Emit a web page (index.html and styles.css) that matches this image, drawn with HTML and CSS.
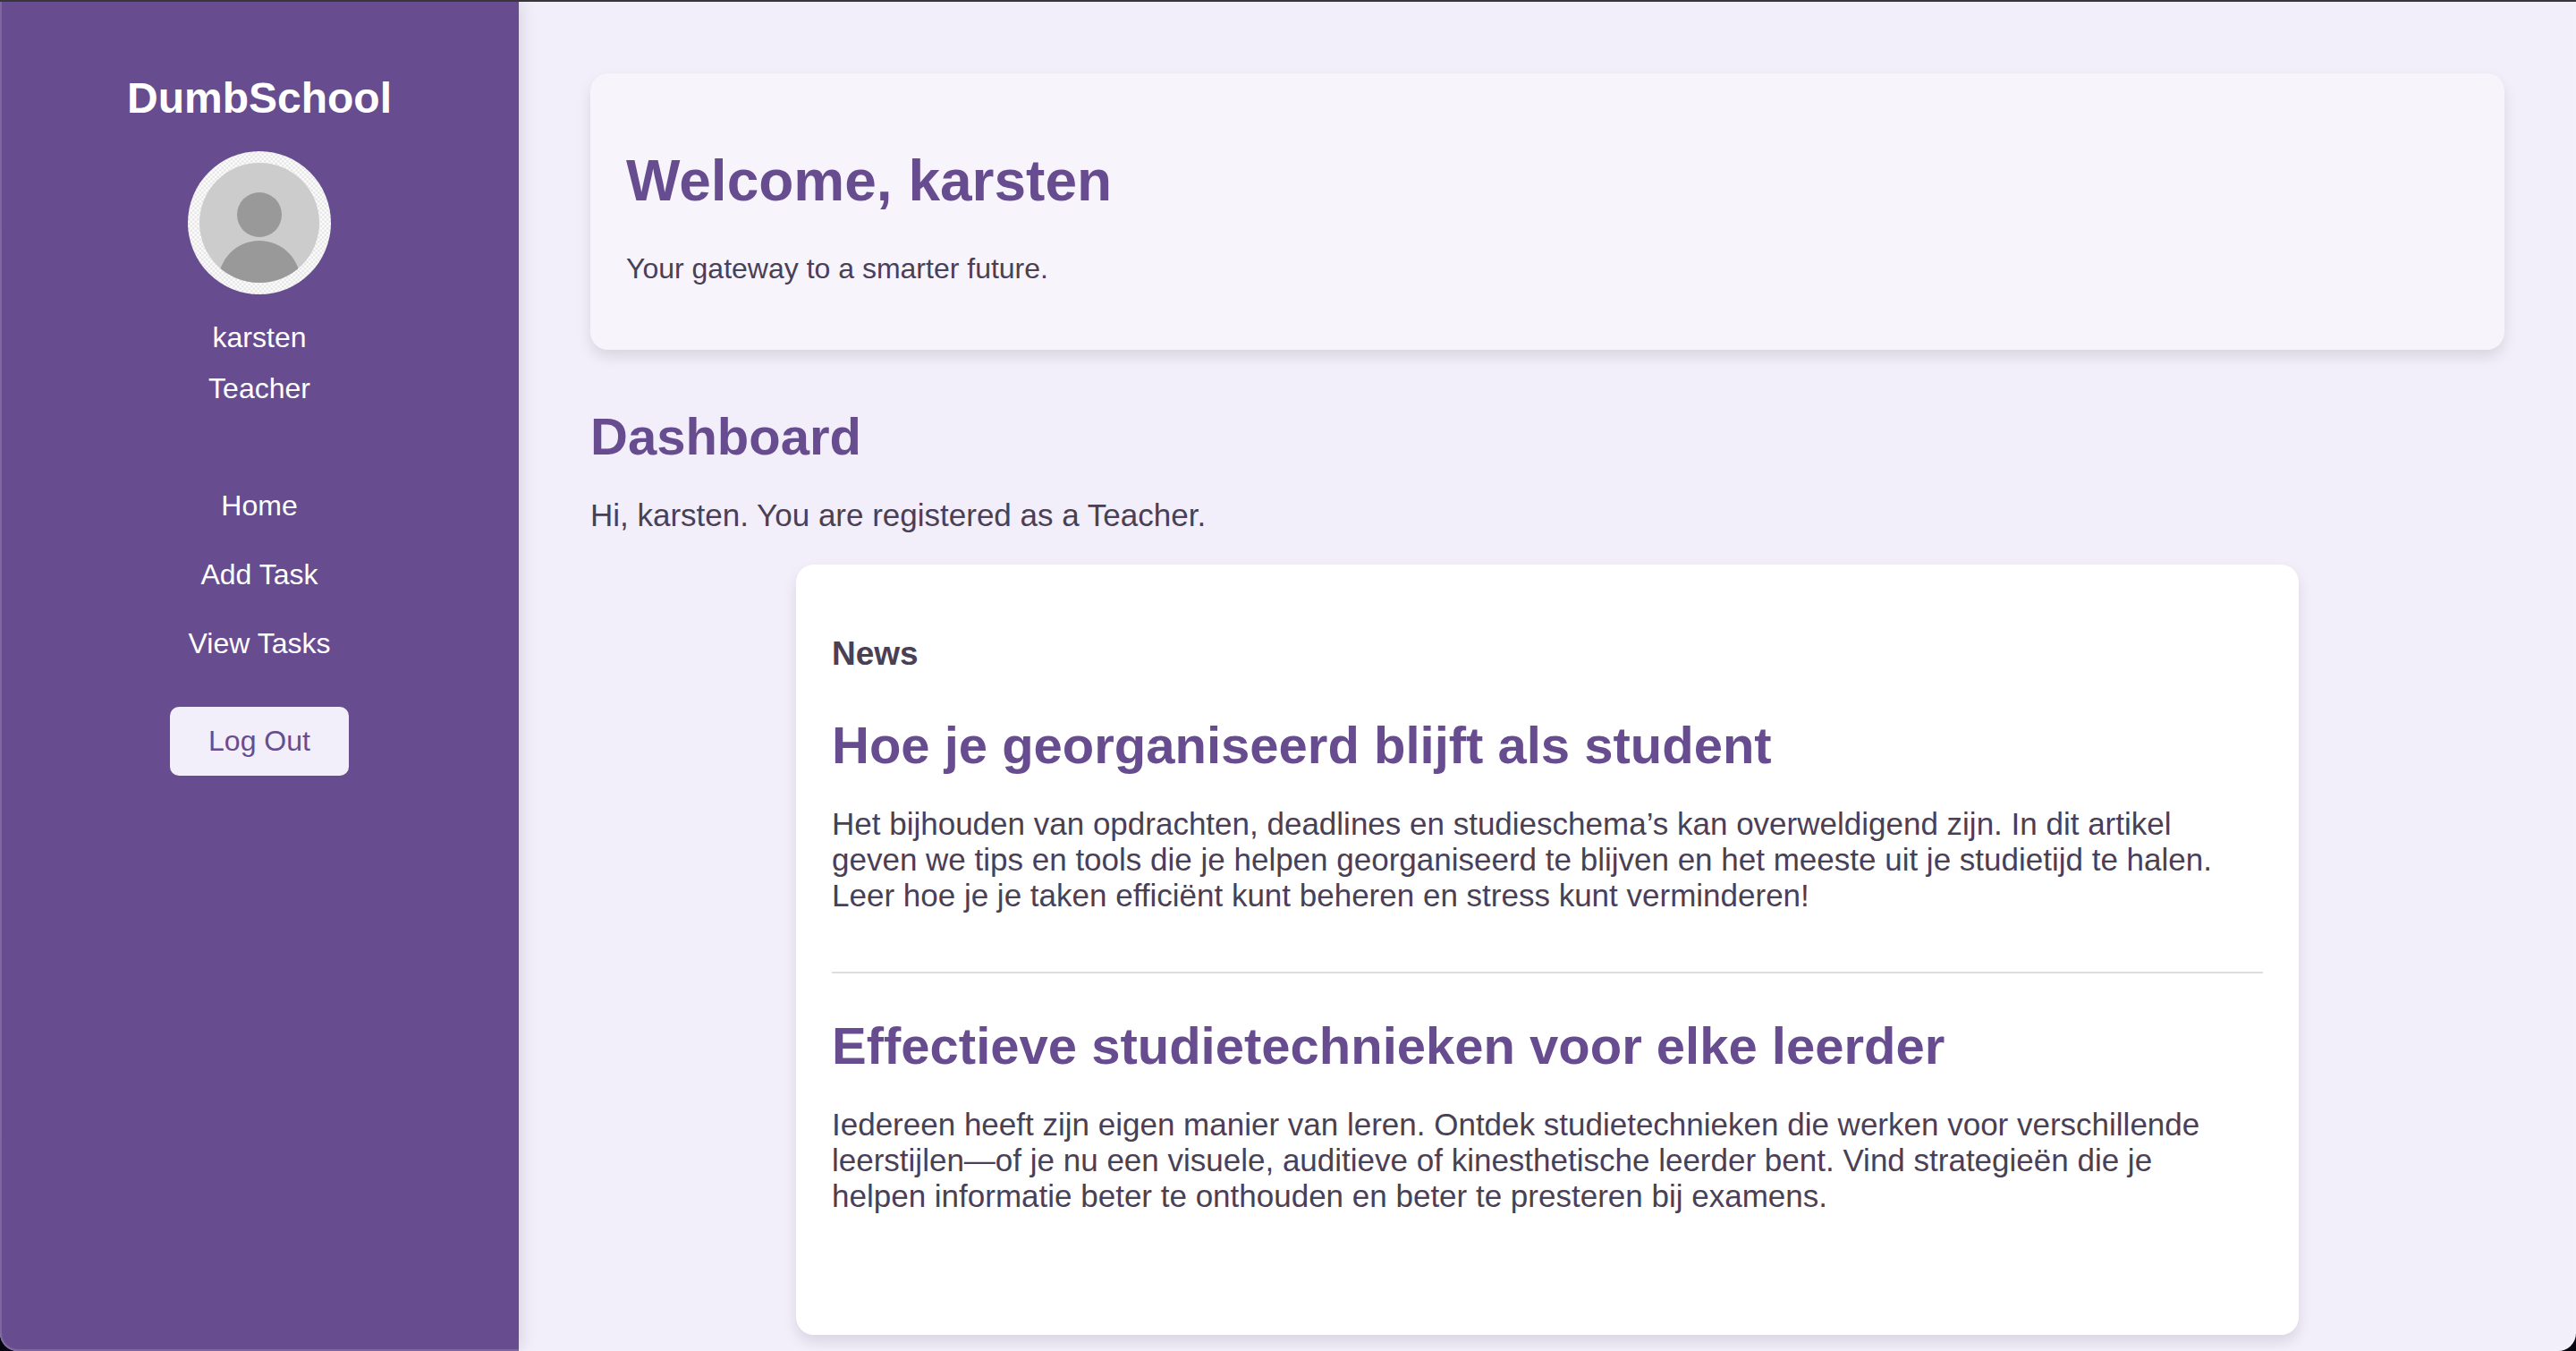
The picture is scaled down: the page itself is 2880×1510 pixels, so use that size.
FILE: index.html
```html
<!DOCTYPE html>
<html lang="nl">
<head>
<meta charset="utf-8">
<meta name="viewport" content="width=device-width, initial-scale=1">
<title>DumbSchool</title>
<link rel="stylesheet" href="styles.css">
</head>
<body>
<div class="app">
  <aside class="sidebar">
    <h2 class="brand">DumbSchool</h2>
    <svg class="avatar" viewBox="0 0 160 160" role="img" aria-label="Profile picture">
      <defs>
        <pattern id="checks" width="5" height="5" patternUnits="userSpaceOnUse">
          <rect width="5" height="5" fill="#fcfcfc"/>
          <path d="M0 0h2.5v2.5H0zM2.5 2.5h2.5v2.5H2.5z" fill="#e8e8e8"/>
        </pattern>
        <clipPath id="disc"><circle cx="80" cy="80" r="67"/></clipPath>
      </defs>
      <circle cx="80" cy="80" r="80" fill="url(#checks)"/>
      <circle cx="80" cy="80" r="67" fill="#ccc"/>
      <g clip-path="url(#disc)" fill="#999">
        <circle cx="80" cy="71" r="25"/>
        <circle cx="80" cy="146" r="46"/>
      </g>
    </svg>
    <p class="profile-line">karsten</p>
    <p class="profile-line">Teacher</p>
    <nav class="nav">
      <a href="#home">Home</a>
      <a href="#add-task">Add Task</a>
      <a href="#view-tasks">View Tasks</a>
    </nav>
    <button class="logout" type="button">Log Out</button>
  </aside>
  <main class="main">
    <header class="welcome">
      <h1>Welcome, karsten</h1>
      <p>Your gateway to a smarter future.</p>
    </header>
    <section class="dashboard">
      <h2 class="title">Dashboard</h2>
      <p class="text">Hi, karsten. You are registered as a Teacher.</p>
      <div class="news">
        <h3>News</h3>
        <article class="article">
          <h2 class="title">Hoe je georganiseerd blijft als student</h2>
          <p class="text">Het bijhouden van opdrachten, deadlines en studieschema’s kan overweldigend zijn. In dit artikel geven we tips en tools die je helpen georganiseerd te blijven en het meeste uit je studietijd te halen. Leer hoe je je taken efficiënt kunt beheren en stress kunt verminderen!</p>
        </article>
        <article class="article">
          <h2 class="title">Effectieve studietechnieken voor elke leerder</h2>
          <p class="text">Iedereen heeft zijn eigen manier van leren. Ontdek studietechnieken die werken voor verschillende leerstijlen—of je nu een visuele, auditieve of kinesthetische leerder bent. Vind strategieën die je helpen informatie beter te onthouden en beter te presteren bij examens.</p>
        </article>
      </div>
    </section>
  </main>
</div>
</body>
</html>
```
FILE: styles.css
```css
* {
  box-sizing: border-box;
}

html {
  background: #050510;
}

body {
  margin: 0;
  color: #4a4055;
  font-family: Arial, "Liberation Sans", sans-serif;
  font-size: 32px;
  line-height: 37px;
}

h1, h2, h3, p {
  margin: 0;
}

.app {
  position: relative;
  display: flex;
  min-height: 100vh;
  border-top: 2px solid #38363b;
  border-radius: 0 0 20px 20px;
  background: #f2eefa;
  overflow: hidden;
}

/* thin highlight along the window edge */
.app::after {
  content: "";
  position: absolute;
  inset: 0;
  border: solid rgba(255, 255, 255, 0.15);
  border-width: 0 2px 2px;
  border-radius: 0 0 20px 20px;
  pointer-events: none;
}

.sidebar {
  display: flex;
  flex: 0 0 580px;
  flex-direction: column;
  align-items: center;
  padding: 80px 40px;
  background: #674d8f;
  box-shadow: 4px 0 16px rgba(0, 0, 0, 0.1);
  color: #fff;
}

.brand {
  font-size: 48px;
  line-height: 55px;
}

.avatar {
  width: 160px;
  height: 160px;
  margin: 32px 0 30px;
}

.profile-line {
  margin-bottom: 20px;
}

.nav {
  display: flex;
  flex-direction: column;
  align-items: center;
  gap: 40px;
  margin: 74px 0 52px;
}

.nav a {
  color: inherit;
  text-decoration: none;
}

.logout {
  width: 200px;
  padding: 20px;
  border: 0;
  border-radius: 10px;
  background: #f2eefa;
  color: #674d8f;
  font: inherit;
  cursor: pointer;
}

.main {
  flex: 1;
  min-width: 0;
  padding: 80px 80px 0;
}

.welcome {
  padding: 83px 40px 72px;
  border-radius: 20px;
  background: #f7f4fc;
  box-shadow: 0 8px 16px rgba(0, 0, 0, 0.1);
}

.welcome h1 {
  margin-bottom: 43px;
  color: #674d8f;
  font-size: 64px;
  line-height: 74px;
}

.dashboard {
  padding-top: 63px;
}

.title {
  margin-bottom: 35px;
  color: #674d8f;
  font-size: 58px;
  line-height: 67px;
}

.text {
  padding-right: 20px;
  font-size: 35px;
  line-height: 40px;
}

.news {
  max-width: 1680px;
  margin: 35px auto 0;
  padding: 79px 40px 70px;
  border-radius: 20px;
  background: #fff;
  box-shadow: 0 8px 16px rgba(0, 0, 0, 0.1);
}

.news h3 {
  font-size: 37px;
  line-height: 42px;
}

.article {
  padding: 47px 0 65px;
}

.article:not(:last-child) {
  border-bottom: 2px solid #ddd;
}
```
